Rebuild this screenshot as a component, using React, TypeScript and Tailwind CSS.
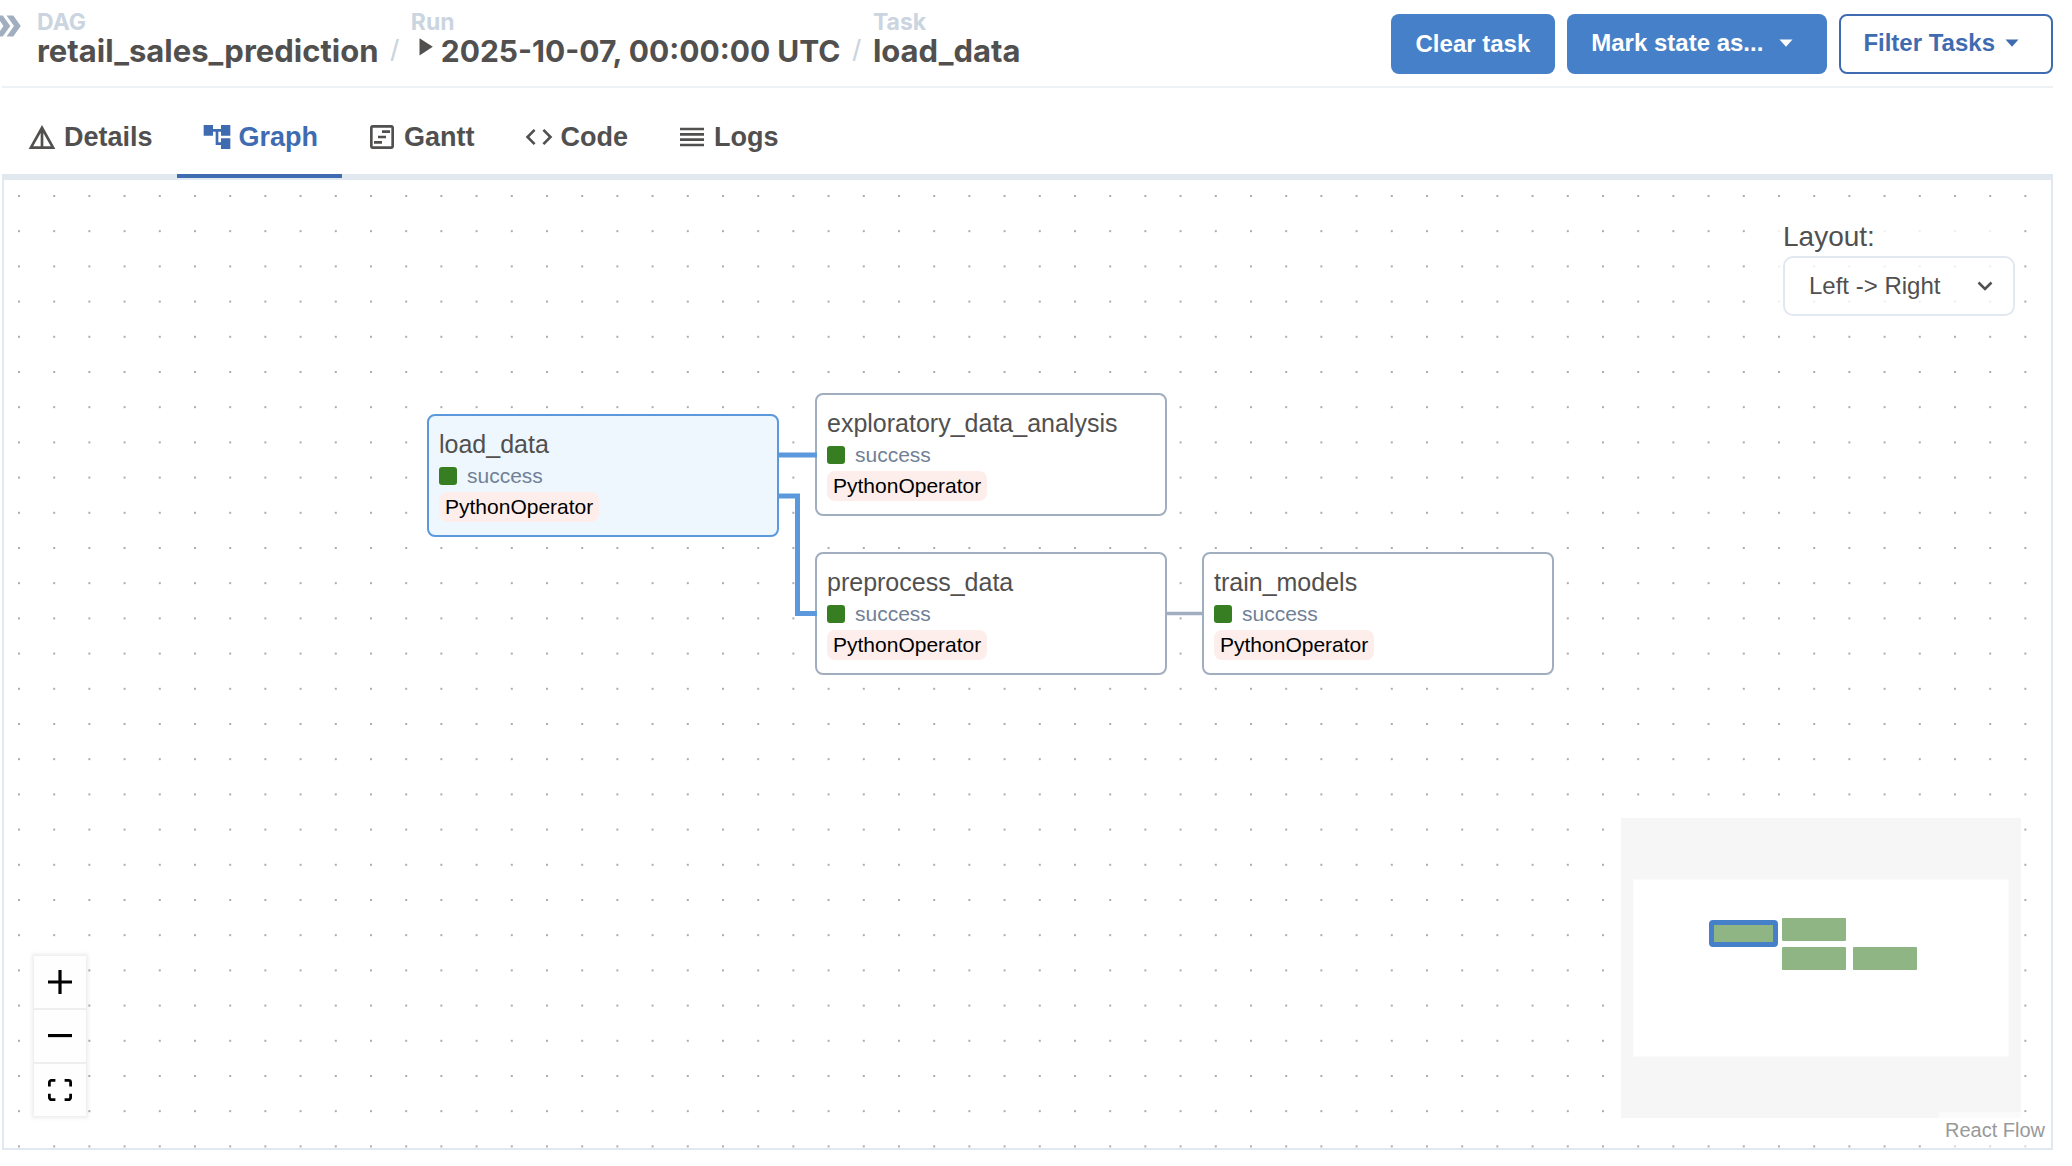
import { useId, useState } from "react";
import type { ReactNode } from "react";
import {
  MdAccountTree,
  MdCode,
  MdDetails,
  MdDoubleArrow,
  MdOutlineViewTimeline,
  MdReorder,
} from "react-icons/md";

const tabs = [
  { name: "Details", Icon: MdDetails },
  { name: "Graph", Icon: MdAccountTree },
  { name: "Gantt", Icon: MdOutlineViewTimeline },
  { name: "Code", Icon: MdCode },
  { name: "Logs", Icon: MdReorder },
];

function Crumb({ label, children }: { label: string; children: ReactNode }) {
  return (
    <li className="flex flex-col whitespace-nowrap font-['Inter',sans-serif] font-bold">
      <span className="text-[23px] leading-[25px] text-[#cbd5e0]">{label}</span>
      <a href="#crumb" className="flex text-[31px] leading-[32px] text-[#51504f]">
        {children}
      </a>
    </li>
  );
}

function Slash() {
  return (
    <li aria-hidden="true" className="px-3 pt-[25px] text-[30px] leading-[32px] text-[#cbd5e0]">
      /
    </li>
  );
}

function Caret() {
  return (
    <svg viewBox="0 0 14 8" className="h-2 w-[14px]" fill="currentColor" aria-hidden="true">
      <path d="M0.5 0.5h13L7 7.8z" />
    </svg>
  );
}

function Header() {
  return (
    <header className="ml-0.5 flex items-start justify-between border-b-2 border-[#edf2f7]">
      <div className="flex h-[86px] items-start">
        <button type="button" aria-label="Show grid" className="-ml-3 mt-2 text-[#a0aec0]">
          <MdDoubleArrow className="size-9" />
        </button>
        <nav aria-label="Breadcrumb" className="pl-[11px] pt-[10px]">
          <ol className="flex">
            <Crumb label="DAG">retail_sales_prediction</Crumb>
            <Slash />
            <Crumb label="Run">
              <svg viewBox="0 0 14 18" className="ml-2 mr-2 mt-[3px] h-[18px] w-[14px]" fill="currentColor" aria-hidden="true">
                <path d="M0.5 0.3L13.8 8.8L0.5 17.5z" />
              </svg>
              <time dateTime="2025-10-07T00:00:00Z" className="text-[30px]">
                2025-10-07, 00:00:00 UTC
              </time>
            </Crumb>
            <Slash />
            <Crumb label="Task">load_data</Crumb>
          </ol>
        </nav>
      </div>
      <div className="flex gap-3 pt-[14px] text-[24px] font-bold leading-[28px]">
        <button type="button" className="h-[60px] rounded-lg bg-[#4680c8] px-[25px] text-white">
          Clear task
        </button>
        <button type="button" className="flex h-[60px] items-center gap-4 rounded-lg bg-[#4680c8] pb-0.5 pl-6 pr-[34px] text-white">
          Mark state as...
          <Caret />
        </button>
        <button type="button" className="flex h-[60px] items-center gap-[10px] rounded-lg border-2 border-[#3f6cb0] pb-0.5 pl-[22px] pr-8 text-[#3f6cb0]">
          Filter Tasks
          <Caret />
        </button>
      </div>
    </header>
  );
}

function TabBar() {
  const [active, setActive] = useState("Graph");
  return (
    <div role="tablist" className="ml-0.5 mt-3 flex text-[27px] font-bold leading-[32px] text-[#51504f]">
      {tabs.map(({ name, Icon }) => (
        <button
          key={name}
          type="button"
          role="tab"
          aria-selected={name === active}
          onClick={() => setActive(name)}
          className={
            "flex h-[78px] items-center gap-1.5 border-b-4 px-6 " +
            (name === active ? "border-[#3f6cb0] text-[#3f6cb0]" : "border-[#e2e8f0]")
          }
        >
          <Icon className="size-8" />
          {name}
        </button>
      ))}
      <div className="flex-1 border-b-4 border-[#e2e8f0]" />
    </div>
  );
}

const nodes = [
  { id: "load_data", place: "left-[423px] top-[234px]", selected: true },
  { id: "exploratory_data_analysis", place: "left-[811px] top-[213px]", selected: false },
  { id: "preprocess_data", place: "left-[811px] top-[372px]", selected: false },
  { id: "train_models", place: "left-[1198px] top-[372px]", selected: false },
];

function TaskNode({ id, place, selected }: (typeof nodes)[number]) {
  return (
    <div
      className={
        "absolute flex h-[123px] w-[352px] flex-col items-start rounded-lg border-2 px-[10px] pt-3 " +
        place +
        (selected ? " border-[#5b98dc] bg-[#eef7fe]" : " border-[#a0aec0] bg-white")
      }
    >
      <div className="text-[25px] leading-[32px] text-[#51504f]">{id}</div>
      <div className="flex h-8 items-center gap-[10px] text-[21px] leading-[32px] text-[#718096]">
        <span className="size-[18px] rounded-[3px] bg-[#377e22]" />
        success
      </div>
      <div className="h-[30px] rounded-lg bg-[#fdeeec] px-1.5 text-[21px] leading-[30px] text-black">
        PythonOperator
      </div>
    </div>
  );
}

function Canvas() {
  const selectId = useId();
  return (
    <main className="relative ml-0.5 flex-1 overflow-hidden border-2 border-[#e2e8f0]">
      <svg className="absolute inset-0 size-full" aria-hidden="true">
        <defs>
          <pattern id="dots" x="14" y="15" width="35.2" height="35.2" patternUnits="userSpaceOnUse">
            <circle cx="1" cy="1" r="0.9" fill="#81818a" />
          </pattern>
        </defs>
        <rect width="100%" height="100%" fill="url(#dots)" />
      </svg>

      {nodes.map((n) => (
        <TaskNode key={n.id} {...n} />
      ))}

      <svg className="pointer-events-none absolute left-0 top-0 h-[500px] w-[1300px]" fill="none" aria-hidden="true">
        <g stroke="#5b98dc" strokeWidth="5">
          <path d="M774 275H813" />
          <path d="M774 316H793.500V433.500H813" />
        </g>
        <path d="M1162 433.500H1199" stroke="#a0aec0" strokeWidth="3.500" />
      </svg>

      <div className="absolute right-7 top-8 flex flex-col gap-[3px] bg-white/80 p-2 text-[#51504f]">
        <label htmlFor={selectId} className="text-[28px] leading-[33px]">
          Layout:
        </label>
        <div className="relative">
          <select
            id={selectId}
            className="h-[60px] w-[232px] appearance-none rounded-[10px] border-2 border-[#e2e8f0] bg-transparent pl-6 pr-12 text-[24px]"
          >
            <option>Left -&gt; Right</option>
            <option>Right -&gt; Left</option>
            <option>Top -&gt; Bottom</option>
            <option>Bottom -&gt; Top</option>
          </select>
          <svg viewBox="0 0 24 24" className="pointer-events-none absolute right-[18px] top-[18px] size-6" fill="none" stroke="currentColor" strokeWidth="2.500" aria-hidden="true">
            <path d="M5.500 8.500L12 15l6.500-6.500" />
          </svg>
        </div>
      </div>

      <div className="absolute bottom-8 left-[30px] flex flex-col gap-0.5 bg-[#eeeeee] shadow-[0_0_4px_2px_rgba(0,0,0,0.08)]">
        <button type="button" aria-label="Zoom in" className="flex size-[52px] items-center justify-center bg-[#fefefe]">
          <svg viewBox="0 0 32 32" className="size-6">
            <path d="M32 18.133H18.133V32h-4.266V18.133H0v-4.266h13.867V0h4.266v13.867H32z" />
          </svg>
        </button>
        <button type="button" aria-label="Zoom out" className="flex size-[52px] items-center justify-center bg-[#fefefe]">
          <svg viewBox="0 0 32 5" className="w-6">
            <path d="M0 0h32v4.200H0z" />
          </svg>
        </button>
        <button type="button" aria-label="Fit view" className="flex size-[52px] items-center justify-center bg-[#fefefe]">
          <svg viewBox="0 0 32 30" className="w-6">
            <path d="M3.692 4.630c0-.53.4-.938.939-.938h5.215V0H4.708C2.130 0 0 2.054 0 4.630v5.216h3.692V4.631zM27.354 0h-5.200v3.692h5.170c.53 0 .984.4.984.939v5.215H32V4.631A4.624 4.624 0 0027.354 0zm.954 24.830c0 .532-.4.940-.939.940h-5.215v3.768h5.215c2.577 0 4.631-2.130 4.631-4.707v-5.139h-3.692v5.139zm-23.677.940c-.531 0-.939-.4-.939-.940v-5.138H0v5.139c0 2.577 2.130 4.707 4.708 4.707h5.138V25.770H4.631z" />
          </svg>
        </button>
      </div>

      <svg viewBox="0 0 400 300" className="absolute bottom-[30px] right-[30px] h-[300px] w-[400px]" role="img" aria-label="Mini map">
        <rect width="400" height="300" fill="#f6f6f6" />
        <rect x="12.500" y="61.500" width="375" height="177" fill="#fff" />
        <rect x="90.500" y="104.500" width="64" height="22" rx="1.500" fill="#8fb584" stroke="#4680c8" strokeWidth="5" />
        <g fill="#8fb584">
          <rect x="161" y="100" width="64" height="23" rx="1" />
          <rect x="161" y="129" width="64" height="23" rx="1" />
          <rect x="232" y="129" width="64" height="23" rx="1" />
        </g>
      </svg>

      <a href="#react-flow" className="absolute bottom-0 right-0 bg-white/50 px-[6px] pb-1 pt-1 text-[20px] leading-[28px] text-[#999999]">
        React Flow
      </a>
    </main>
  );
}

export default function App() {
  return (
    <div className="flex min-h-screen flex-col overflow-hidden bg-white pb-4 pr-[19px] font-['Liberation_Sans',Arial,sans-serif]">
      <Header />
      <TabBar />
      <Canvas />
    </div>
  );
}
